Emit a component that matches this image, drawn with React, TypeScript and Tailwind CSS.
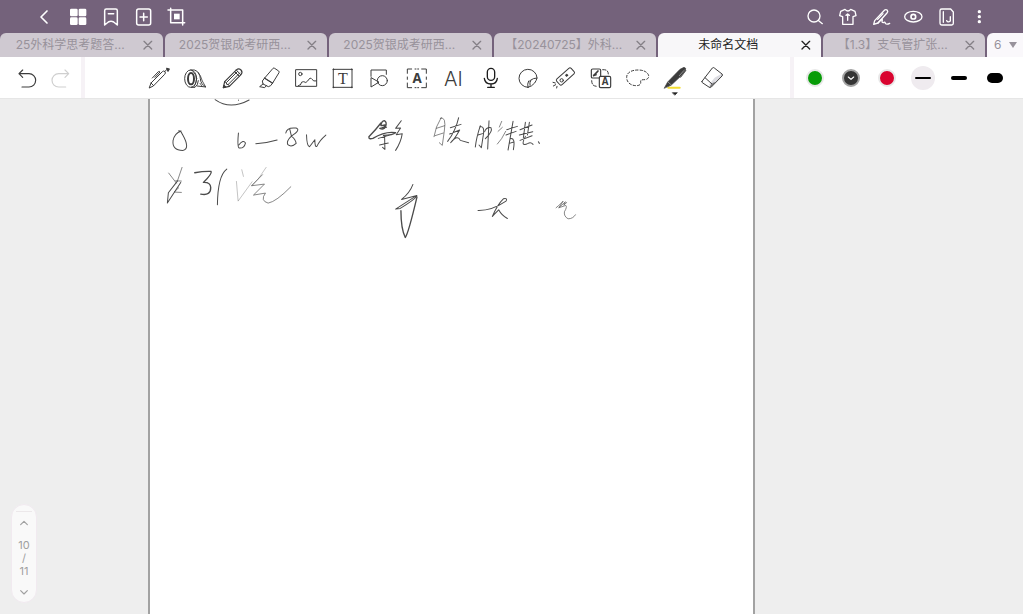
import type { ReactNode } from "react";
import { clsx } from "clsx";

type IconProps = {
  children: ReactNode;
  className?: string;
};

// every icon is drawn on a 72 unit grid and shown at 24px
const Icon = ({ children, className }: IconProps) => (
  <svg
    viewBox="0 0 72 72"
    fill="none"
    stroke="currentColor"
    strokeWidth="3.5"
    strokeLinecap="round"
    strokeLinejoin="round"
    aria-hidden="true"
    className={clsx("size-6 shrink-0 overflow-visible", className)}
  >
    {children}
  </svg>
);

const navLeft = [
  { label: "返回", art: <path d="M42 18 L24 36 L42 54" strokeWidth="5" /> },
  {
    label: "缩略图",
    art: (
      <g fill="currentColor" stroke="none">
        <rect x="12" y="11" width="23" height="23" rx="4" />
        <rect x="38" y="11" width="23" height="23" rx="4" />
        <rect x="12" y="37" width="23" height="23" rx="4" />
        <rect x="38" y="37" width="23" height="23" rx="4" />
      </g>
    ),
  },
  {
    label: "书签",
    art: (
      <g strokeWidth="4.5">
        <path d="M17 17 a5 5 0 0 1 5 -5 H50 a5 5 0 0 1 5 5 V60 L44 51 Q36 47 28 51 L17 60 Z" />
        <path d="M28 26 H44" />
      </g>
    ),
  },
  {
    label: "添加页面",
    art: (
      <g strokeWidth="4.5">
        <rect x="14" y="12" width="42" height="48" rx="6" />
        <path d="M35 25 V47 M24 36 H46" />
      </g>
    ),
  },
  {
    label: "裁剪",
    art: (
      <g strokeWidth="4.5">
        <path d="M9 15 H53 V60 M17 10 V53 H59" />
        <rect x="27" y="26" width="17" height="17" fill="currentColor" stroke="none" />
      </g>
    ),
  },
];

const navRight = [
  {
    label: "搜索",
    art: (
      <>
        <circle cx="36" cy="33" r="18" />
        <path d="M50 47 L61 56" />
      </>
    ),
  },
  {
    label: "主题",
    art: (
      <>
        <path d="M30 13 L17 19 L14 32 L23 35 V58 H54 V35 L63 32 L60 19 L47 13 Q39 23 30 13 Z" />
        <path d="M33 31 L38 27 L43 31 M38 28 V46" />
      </>
    ),
  },
  {
    label: "手写笔",
    art: (
      <>
        <path d="M20 47 L50 15 Q54 12 58 16 Q61 20 57 24 L30 54 L17 58 Z" />
        <path d="M29 43 L45 26 M30 54 Q43 39 43 45 Q40 53 46 53 Q51 49 52 55 Q56 60 65 55" />
      </>
    ),
  },
  {
    label: "阅读模式",
    art: (
      <>
        <ellipse cx="37" cy="35" rx="26" ry="16" />
        <circle cx="37" cy="35" r="7" strokeWidth="5" />
      </>
    ),
  },
  {
    label: "分页",
    art: (
      <>
        <path d="M18 17 a5 5 0 0 1 5 -5 H50 L58 21 V55 a5 5 0 0 1 -5 5 H23 a5 5 0 0 1 -5 -5 Z" />
        <path d="M28 20 V52 M49 35 V48 Q42 54 38 47" />
      </>
    ),
  },
  {
    label: "更多",
    art: (
      <g fill="currentColor" stroke="none">
        <circle cx="37" cy="20" r="5" />
        <circle cx="37" cy="35" r="5" />
        <circle cx="37" cy="50" r="5" />
      </g>
    ),
  },
];

const tabs = [
  { title: "25外科学思考题答..." },
  { title: "2025贺银成考研西..." },
  { title: "2025贺银成考研西..." },
  { title: "【20240725】外科..." },
  { title: "未命名文档", active: true },
  { title: "【1.3】支气管扩张..." },
];

const tools = [
  {
    label: "钢笔",
    art: (
      <>
        <path d="M7 65 L12 51 L46 17 Q50 13 54 17 Q57 21 53 25 L20 59 Z M12 51 L20 59" strokeWidth="3" />
        <path d="M16 36 L34 17 Q37 15 39 18 L24 34 M53 17 L60 10" strokeWidth="3" />
        <path d="M59 7 L67 9 L63 16 Z" fill="currentColor" />
      </>
    ),
  },
  {
    label: "胶带",
    art: (
      <>
        <ellipse cx="20" cy="38" rx="18" ry="26" strokeWidth="3" />
        <ellipse cx="21" cy="38" rx="9" ry="17" strokeWidth="6" />
        <path d="M20 12 H31 Q48 17 49 38 Q50 55 66 63 L40 60 M22 64 H33 Q42 58 43 44" strokeWidth="3" />
        <path d="M27 16 Q38 26 37 40 Q36 54 30 62 M42 20 Q51 29 55 45 L64 61 M48 52 L54 60" strokeWidth="2.5" />
      </>
    ),
  },
  {
    label: "铅笔",
    art: (
      <>
        <path d="M7 65 L11 47 L47 11 Q53 6 60 12 Q66 19 60 26 L25 61 Z" />
        <path d="M11 47 L16 50 L17 55 L23 56 L25 61 M17 49 L50 16 M22 55 L56 21 M41 17 L55 31 M46 12 L59 26" strokeWidth="3" />
        <path d="M7 65 L9 58 L14 63 Z" fill="currentColor" />
      </>
    ),
  },
  {
    label: "荧光笔",
    art: (
      <>
        <path d="M20 36 L45 7 Q47 5 50 7 L62 15 Q64 17 63 20 L44 51 Z" strokeWidth="3" />
        <path d="M20 36 L13 45 L15 54 L31 62 L38 59 L44 51 M15 54 L5 62 L20 65 L25 59 M20 36 L44 51" strokeWidth="3" />
      </>
    ),
  },
  {
    label: "图片",
    art: (
      <g strokeWidth="3">
        <rect x="3" y="11" width="62" height="50" />
        <circle cx="16" cy="24" r="5" />
        <path d="M9 60 Q12 56 16 57 Q19 45 26 47 Q33 53 38 45 Q46 31 51 40 Q55 47 64 45" />
      </g>
    ),
  },
  {
    label: "文本框",
    art: (
      <>
        <rect x="8" y="10" width="55" height="54" strokeWidth="3" />
        <path d="M7 9 h2 v2 h-2 z M62 9 h2 v2 h-2 z M7 63 h2 v2 h-2 z M62 63 h2 v2 h-2 z" strokeWidth="3" />
        <text x="36" y="53" textAnchor="middle" fontSize="48" fill="currentColor" stroke="none" className="font-['Liberation_Serif',serif]">T</text>
      </>
    ),
  },
  {
    label: "形状",
    art: (
      <g strokeWidth="3">
        <path d="M9 31 V12 H55 V25 M9 36 V63 L32 49 Z" />
        <circle cx="43" cy="44" r="15" />
      </g>
    ),
  },
  {
    label: "文字识别",
    art: (
      <>
        <path d="M7 22 V9 H20 M50 9 H64 V22 M64 51 V65 H50 M20 65 H7 V51" strokeWidth="3" />
        <path d="M30 9 H33 M38 9 H41 M30 65 H33 M38 65 H41 M7 33 V40 M64 33 V40" strokeWidth="3" />
        <text x="36" y="51" textAnchor="middle" fontSize="40" fontWeight="700" fill="currentColor" stroke="none" className="font-['Noto_Sans',sans-serif]">A</text>
      </>
    ),
  },
  {
    label: "AI 助手",
    art: (
      <text x="34" y="59" textAnchor="middle" fontSize="60" fontWeight="300" fill="currentColor" stroke="none" className="font-['Inter',sans-serif]">AI</text>
    ),
  },
  {
    label: "录音",
    art: (
      <g className="text-[#1c1c1c]" strokeWidth="4">
        <rect x="25" y="7" width="22" height="36" rx="11" />
        <path d="M16 37 Q18 54 36 54 Q53 54 55 37 M36 54 V64 M26 64 H46" />
      </g>
    ),
  },
  {
    label: "贴纸",
    art: (
      <g strokeWidth="3">
        <path d="M36 64 A27 27 0 1 1 63 36 Q61 44 56 51 Q47 62 36 64 Z" />
        <path d="M36 64 Q33 54 38 45 Q41 47 43 43 Q52 36 63 36 M42 58 Q40 50 44 44" />
      </g>
    ),
  },
  {
    label: "激光笔",
    art: (
      <g strokeWidth="3">
        <rect x="11" y="20" width="58" height="23" rx="5" transform="rotate(-42 40 31)" />
        <circle cx="29" cy="43" r="5" />
        <circle cx="44" cy="28" r="3" fill="currentColor" />
        <path d="M3 49 L10 51 M4 60 L11 56 M14 66 L15 61" />
      </g>
    ),
  },
  {
    label: "转换",
    art: (
      <>
        <rect x="7" y="9" width="28" height="27" rx="4" />
        <path d="M14 29 L27 15 M14 28 L21 26" strokeWidth="5" />
        <path d="M41 11 Q58 10 58 24 M8 44 Q8 61 24 61" strokeWidth="3" strokeDasharray="9 6" />
        <rect x="31" y="31" width="34" height="34" rx="4" className="fill-white" />
        <text x="48" y="58" textAnchor="middle" fontSize="29" fontWeight="700" fill="currentColor" stroke="none" className="font-['Noto_Sans',sans-serif]">A</text>
      </>
    ),
  },
  {
    label: "套索",
    art: (
      <path d="M36 12 C16 12 2 20 2 34 C2 50 15 59 31 59 C42 59 45 54 44 48 C43 41 49 41 57 41 C67 40 70 33 67 26 C62 16 50 12 36 12 Z" strokeWidth="3" strokeDasharray="7 6" />
    ),
  },
  {
    label: "马克笔",
    art: (
      <>
        <path d="M16 65 H50" stroke="#f4de32" strokeWidth="6" />
        <path d="M4 66 L14 48 L51 10 L63 4 L68 7 L67 14 L56 28 L25 57 Z" fill="currentColor" strokeWidth="2" />
        <path d="M15 48 L25 57 M49 29 L64 12" stroke="#bdbdbd" strokeWidth="2" />
        <path d="M62 14 L69 13 L53 34" stroke="#5a5a5a" strokeWidth="3" />
        <path d="M29 80 H43 L36 87 Z" fill="#222" stroke="#222" strokeWidth="2" />
      </>
    ),
  },
  {
    label: "橡皮擦",
    art: (
      <>
        <path d="M44 35 L67 22 Q69 25 67 28 L34 64 L27 56 Z" fill="#dcdce1" stroke="none" />
        <path d="M6 46 L37 6 Q40 3 43 6 L66 24 Q69 27 66 30 L34 63 Q31 66 28 64 L7 50 Q5 48 6 46 Z M15 35 L37 55 L29 63 M37 55 L42 50" strokeWidth="3" />
      </>
    ),
  },
];

const strokes = [
  { d: "M195 2 Q240 34 297 3 M265 3 v1", w: 3 },
  { d: "M86 95 Q93 95 97 106 Q122 150 98 154 Q66 153 69 125 Q73 103 93 96", w: 3 },
  { d: "M265 102 Q261 144 267 147 Q282 149 286 132 Q280 120 266 138 M317 134 Q352 132 381 123", w: 3 },
  { d: "M407 102 Q409 84 438 87 Q453 93 423 112 Q408 126 413 137 Q424 146 438 133 Q436 120 424 112 L419 91", w: 3 },
  { d: "M469 107 Q470 142 478 143 L494 122 Q494 146 500 142 Q508 124 527 108", w: 3 },
  { d: "M56 222 L79 252 M96 205 L82 246 M94 246 L77 245 M86 266 L72 279 L94 280", w: 2 },
  { d: "M82 246 L55 281 L52 312 L92 250", w: 3 },
  { d: "M134 221 Q161 216 183 217 Q187 224 160 250 Q181 249 182 265 Q182 291 152 285", w: 4 },
  { d: "M230 210 Q203 230 202 317", w: 3 },
  { d: "M275 212 L280 232 M259 247 L264 306 L306 248 M348 205 L324 240 L306 260", w: 1 },
  { d: "M337 227 L304 260 L343 255 L310 288 L346 282 Q329 305 354 312 Q378 308 422 263", w: 2 },
  // 影
  { d: "M692 80 Q694 66 702 65 Q711 69 706 83 Q700 94 689 88 M694 80 L704 78 Q704 86 696 86 M692 72 Q677 92 656 113 Q655 122 668 118 Q705 96 736 101 Q728 108 700 109", w: 4 },
  { d: "M689 88 L709 85 M684 118 L716 109 M703 110 L704 151 L697 145 M688 138 L714 132", w: 3 },
  { d: "M753 65 L736 88 L751 87 L738 107 L756 104 Q752 130 736 154", w: 3 },
  // 胰
  { d: "M873 55 Q855 84 851 113 M870 58 Q889 50 882 96 L876 139 L867 131 M858 88 L883 80 M854 110 L879 102", w: 2 },
  { d: "M900 86 L932 76 M925 56 Q916 96 892 127 M898 105 L928 93 Q914 119 901 131 Q922 105 930 124 L955 131", w: 3 },
  // 肿
  { d: "M990 80 Q978 116 975 144 M988 84 Q1005 78 998 114 L993 146 L986 138 M983 108 L999 103", w: 3 },
  { d: "M1003 98 Q1008 84 1022 86 Q1028 97 1005 119 M1016 65 L1012 150", w: 3 },
  { d: "M1054 67 L1047 84 M1056 85 L1043 97 M1041 135 Q1054 122 1066 97", w: 2 },
  { d: "M1069 92 L1101 82 M1088 67 L1078 125 M1067 108 L1097 97 M1073 153 L1079 119 Q1096 114 1089 152 M1077 133 L1090 129", w: 3 },
  { d: "M1109 92 L1145 78 M1125 70 L1119 116 M1137 70 L1131 108 M1107 108 L1147 98 M1109 124 L1145 110 M1125 112 Q1108 146 1133 133 Q1141 128 1148 136 M1164 128 L1167 133", w: 3 },
  // 胃
  { d: "M788 256 Q779 281 754 301 L800 289 L736 330 L750 328 Q793 302 800 291", w: 3 },
  { d: "M752 335 Q752 389 765 415 Q774 404 800 294", w: 4 },
  { d: "M983 334 Q1024 335 1067 306 Q1073 296 1059 299 Q1041 316 1026 352 Q1029 348 1045 332 Q1053 348 1071 358", w: 3 },
  { d: "M1217 326 Q1237 309 1238 306 L1226 325 L1245 308 L1240 318 L1249 310 M1225 326 L1246 319 Q1251 323 1242 338 Q1240 352 1253 359 Q1268 359 1275 347", w: 2 },
];

const colors = [
  { name: "绿色", dot: "bg-[#089c08]" },
  { name: "黑色", dot: "bg-[#353535]", selected: true },
  { name: "红色", dot: "bg-[#d9042f]" },
];

const widths = [
  { name: "细", line: "h-[2px] w-4", selected: true },
  { name: "中", line: "h-1 w-4" },
  { name: "粗", line: "h-[10px] w-4" },
];

const TopBar = () => (
  <header className="flex h-[33px] items-center justify-between bg-[#74627b] px-7 text-white">
    <nav className="flex">
      {navLeft.map((item) => (
        <button key={item.label} type="button" aria-label={item.label} className="flex w-[33px] justify-center">
          <Icon>{item.art}</Icon>
        </button>
      ))}
    </nav>
    <nav className="flex">
      {navRight.map((item) => (
        <button key={item.label} type="button" aria-label={item.label} className="flex w-[33px] justify-center">
          <Icon className="stroke-4">{item.art}</Icon>
        </button>
      ))}
    </nav>
  </header>
);

const TabBar = () => (
  <div className="flex h-6 gap-[2px] bg-[#74627b] text-xs">
    {tabs.map((tab, i) => (
      <div
        key={i}
        className={clsx(
          "flex min-w-0 flex-1 items-center rounded-t-md pl-2",
          tab.active ? "bg-[#f8f7f9] text-[#222]" : "bg-[#cfc9d1] text-[#98929b]"
        )}
      >
        <button type="button" className="flex-1 truncate text-center">
          {tab.title}
        </button>
        <button type="button" aria-label="关闭" className="flex w-[30px] justify-center">
          <Icon className={tab.active ? "text-[#222]" : "text-[#858087]"}>
            <path d="M24 25 L47 48 M47 25 L24 48" strokeWidth="4" />
          </Icon>
        </button>
      </div>
    ))}
    <button
      type="button"
      aria-label="全部标签"
      className="flex w-9 items-center justify-between rounded-tl-md bg-[#faf8fb] pl-[7px] pr-[6px] text-[#98929b]"
    >
      6
      <svg viewBox="0 0 8 6" className="h-[6px] w-2" fill="#98929b" aria-hidden="true">
        <path d="M0 0 H8 L4 6 Z" />
      </svg>
    </button>
  </div>
);

const Toolbar = () => (
  <div className="flex h-[42px] items-stretch border-b border-[#e6e6e6] bg-white text-[#3c3c3c]">
    {/* History */}
    <div className="flex items-center border-r-4 border-[#f6f2f6] pl-[10px] pr-[5px]">
      <button type="button" aria-label="撤销" className="flex w-[33px] justify-center">
        <Icon>
          <path d="M23 12 L12 23 L23 34 M12 23 H42 a20 20 0 0 1 0 40 H21" />
        </Icon>
      </button>
      <button type="button" aria-label="重做" className="flex w-[33px] justify-center text-[#cfcfcf]">
        <Icon>
          <path d="M51 12 L62 23 L51 34 M62 23 H32 a20 20 0 0 0 0 40 H53" />
        </Icon>
      </button>
    </div>

    {/* Tools */}
    <div className="grid flex-1 grid-cols-16 items-center pl-14 pr-15">
      {tools.map((tool) => (
        <button key={tool.label} type="button" aria-label={tool.label} className="flex justify-center">
          <Icon>{tool.art}</Icon>
        </button>
      ))}
    </div>

    {/* Colors and stroke widths */}
    <div className="flex items-center border-l-4 border-[#f6f2f6] pl-[3px] pr-[10px]">
      {colors.map((color) => (
        <button key={color.name} type="button" aria-label={color.name} className="flex w-9 justify-center">
          <span
            className={clsx(
              "flex size-[18px] items-center justify-center rounded-full border-2",
              color.dot,
              color.selected ? "border-[#a3a3a3]" : "border-[#e8e8e8]"
            )}
          >
            {color.selected && (
              <Icon className="text-white">
                <path d="M28 33 L36 40 L44 33" />
              </Icon>
            )}
          </span>
        </button>
      ))}
      {widths.map((width) => (
        <button key={width.name} type="button" aria-label={width.name} className="flex w-9 justify-center">
          <span
            className={clsx(
              "flex size-6 items-center justify-center rounded-full",
              width.selected && "bg-[#efebef]"
            )}
          >
            <span className={clsx("rounded-full bg-black", width.line)} />
          </span>
        </button>
      ))}
    </div>
  </div>
);

const Pager = () => (
  <div className="flex w-[26px] flex-col items-center rounded-full border border-[#f1eaf0] bg-[#f9f9f9] pt-[6px] text-[11px] leading-[13px] text-[#a0a0a0]">
    <div className="h-px w-4 bg-[#ece8ea]" />
    <button type="button" aria-label="上一页">
      <Icon>
        <path d="M26 38 L36 28 L46 38" />
      </Icon>
    </button>
    <div className="flex flex-col items-center pt-[3px]">
      <span>10</span>
      <span>/</span>
      <span>11</span>
    </div>
    <button type="button" aria-label="下一页">
      <Icon>
        <path d="M26 38 L36 48 L46 38" />
      </Icon>
    </button>
  </div>
);

export default function App() {
  return (
    <div className="flex min-h-screen flex-col bg-[#eee] font-['Inter','Noto_Sans_CJK_SC',sans-serif]">
      <TopBar />
      <TabBar />
      <Toolbar />

      <main className="flex flex-1">
        <aside className="flex w-[14.5%] flex-col justify-end pb-[11px] pl-[11px]">
          <Pager />
        </aside>

        {/* Page */}
        <section className="w-[59.3%] border-x-2 border-[#a2a2a2] bg-white">
          <svg
            viewBox="0 0 1806 500"
            role="img"
            aria-label="手写笔记"
            fill="none"
            stroke="#4b4b4b"
            strokeLinecap="round"
            strokeLinejoin="round"
            className="w-full"
          >
            {strokes.map((stroke, i) => (
              <path key={i} d={stroke.d} strokeWidth={stroke.w} />
            ))}
          </svg>
        </section>
      </main>
    </div>
  );
}
